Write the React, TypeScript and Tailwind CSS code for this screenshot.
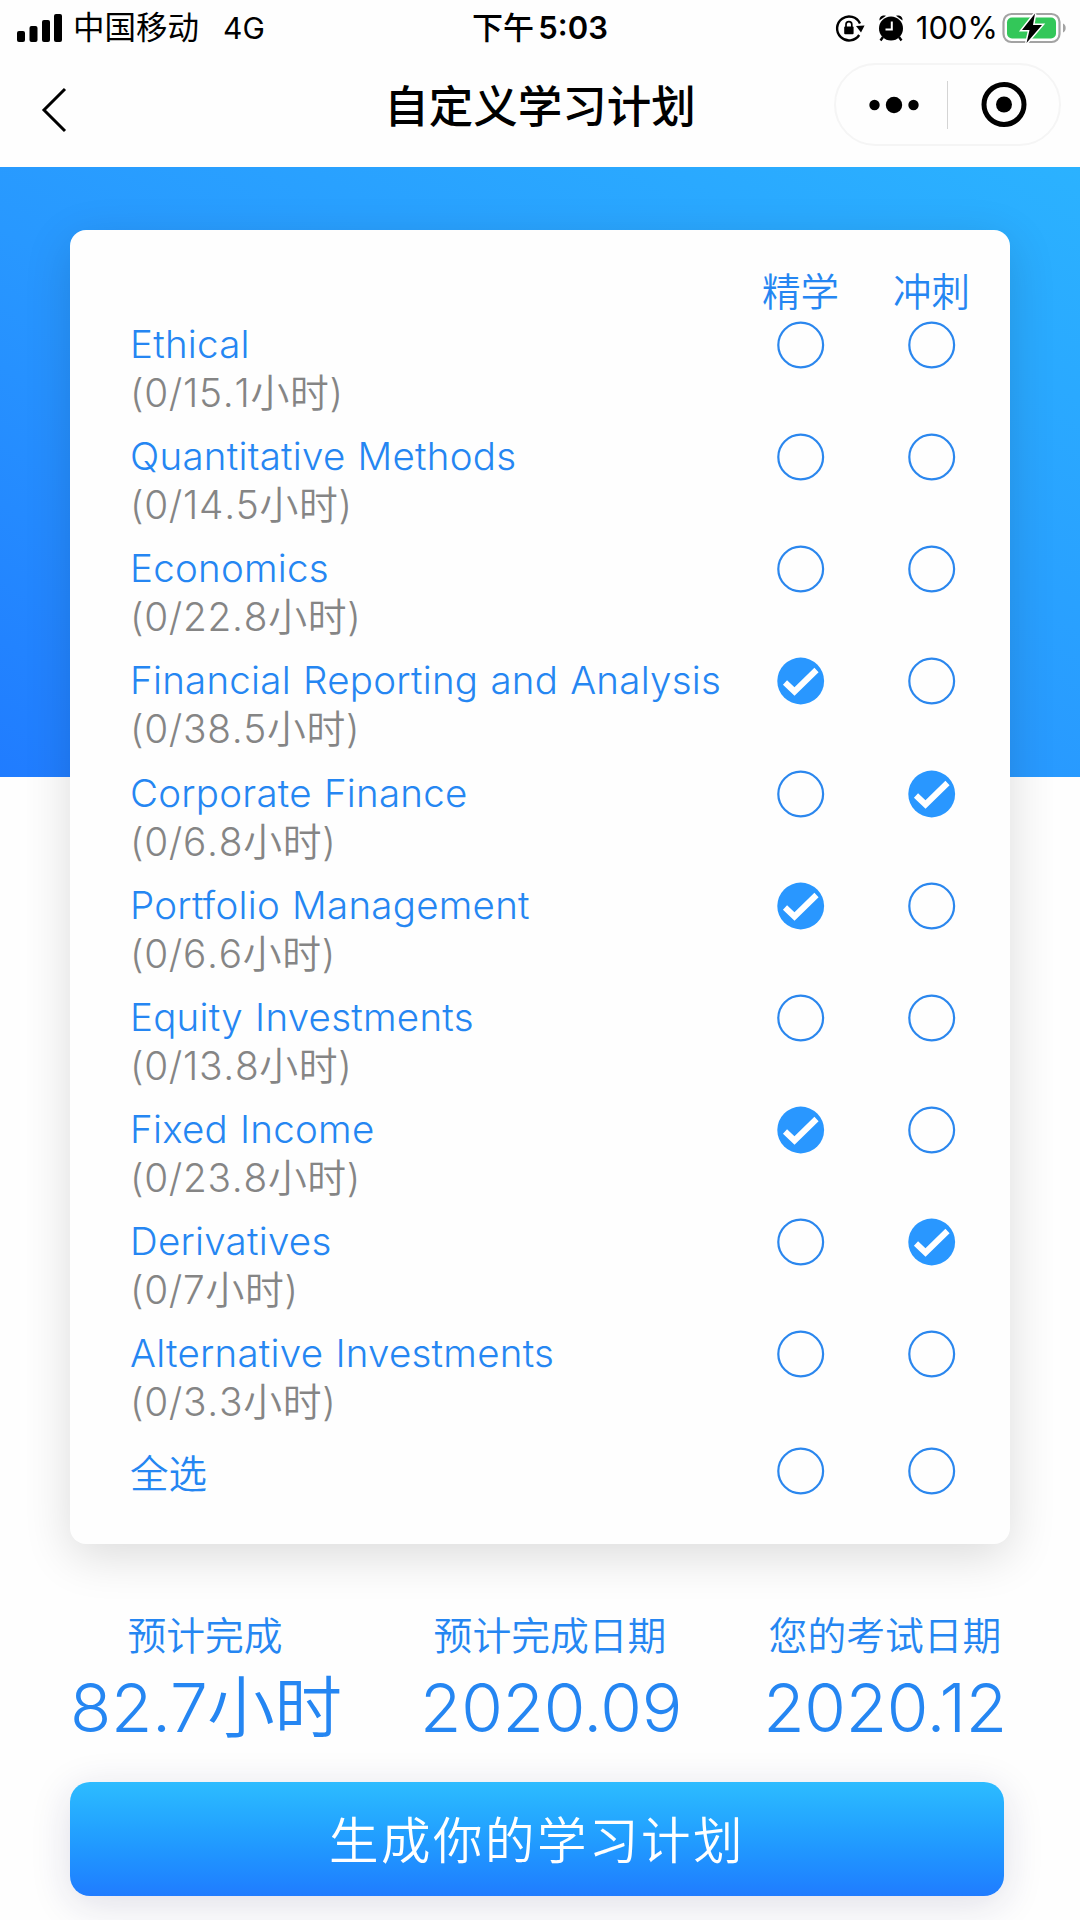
import { useState } from 'react'

type Mode = 'study' | 'sprint'

interface Subject {
  name: string
  hours: string
  mode: Mode | null
}

const initialSubjects: Subject[] = [
  { name: 'Ethical', hours: '15.1', mode: null },
  { name: 'Quantitative Methods', hours: '14.5', mode: null },
  { name: 'Economics', hours: '22.8', mode: null },
  { name: 'Financial Reporting and Analysis', hours: '38.5', mode: 'study' },
  { name: 'Corporate Finance', hours: '6.8', mode: 'sprint' },
  { name: 'Portfolio Management', hours: '6.6', mode: 'study' },
  { name: 'Equity Investments', hours: '13.8', mode: null },
  { name: 'Fixed Income', hours: '23.8', mode: 'study' },
  { name: 'Derivatives', hours: '7', mode: 'sprint' },
  { name: 'Alternative Investments', hours: '3.3', mode: null },
]

function StatusBar() {
  return (
    <div className="grid h-[54px] grid-cols-[1fr_auto_1fr] items-center text-[30px] leading-[54px] whitespace-nowrap">
      <div className="flex items-center pl-[17px]">
        <svg className="h-[28px] w-[46px]" viewBox="0 0 46 28">
          <rect x="0" y="17" width="8" height="11" rx="2" />
          <rect x="12.5" y="12" width="8" height="16" rx="2" />
          <rect x="25" y="6" width="8" height="22" rx="2" />
          <rect x="37" y="0" width="8" height="28" rx="2" />
        </svg>
        <span className="ml-[10px] pt-px text-[31.5px]">中国移动</span>
        <span className="ml-[24px]">4G</span>
      </div>
      <div className="text-[31px] font-medium">
        下午 <span className="-ml-1 font-semibold">5:03</span>
      </div>
      <div className="flex items-center justify-end pr-[12px]">
        <svg className="h-[30px] w-[30px]" viewBox="0 0 30 30">
          <path d="M25 10.5A12 12 0 1 0 24.2 22" fill="none" stroke="black" strokeWidth="2.4" />
          <path d="M21 13l8.6-.5-3.6 7z" />
          <rect x="9.2" y="13.5" width="9.4" height="7.8" rx="1" />
          <path d="M11 14v-2.4a2.9 2.9 0 0 1 5.8 0V14" fill="none" stroke="black" strokeWidth="1.7" />
        </svg>
        <svg className="ml-[13px] h-[30px] w-[26px]" viewBox="0 0 26 30">
          <circle cx="13" cy="15.5" r="12" />
          <path d="M1.5 7.5C1 4 4 1.5 8 2.8zM24.5 7.5C25 4 22 1.5 18 2.8z" />
          <path d="M5 24l-2.5 3.5M21 24l2.5 3.5" stroke="black" strokeWidth="2.4" />
          <path d="M13.8 8.5v8H7.5" fill="none" stroke="white" strokeWidth="2" />
        </svg>
        <span className="ml-[12px] text-[31px]">100%</span>
        <svg className="ml-[4px] h-[34px] w-[66px]" viewBox="0 0 66 34">
          <rect x="1.5" y="3" width="56" height="28" rx="8" fill="none" stroke="#a3a3a3" strokeWidth="2.2" />
          <rect x="5" y="6.5" width="49" height="21" rx="5" fill="#33c759" />
          <path d="M61 12.5c3.6 1.5 3.6 7.5 0 9z" fill="#a3a3a3" />
          <path d="M33 2.5L20 19h7.5l-3 13L40 14h-9z" fill="black" stroke="white" strokeWidth="3" paintOrder="stroke" />
        </svg>
      </div>
    </div>
  )
}

function NavBar() {
  return (
    <div className="grid h-[113px] grid-cols-[1fr_auto_1fr] items-start">
      <svg className="mt-[33px] ml-[41px] h-[46px] w-[27px]" viewBox="0 0 27 46" fill="none" stroke="black" strokeWidth="3">
        <path d="M24 2L3 23l21 21" />
      </svg>
      <h1 className="pt-[21px] text-[44.5px] leading-[64px] font-medium whitespace-nowrap">自定义学习计划</h1>
      <div className="mt-[9px] mr-[19px] flex h-[83px] w-[227px] items-center justify-self-end rounded-full border-2 border-[#f5f5f5]">
        <svg className="ml-[32px] h-[20px] w-[52px]" viewBox="0 0 52 20">
          <circle cx="6.5" cy="10" r="5.2" />
          <circle cx="26" cy="10" r="8.2" />
          <circle cx="45.5" cy="10" r="5.2" />
        </svg>
        <div className="ml-[27px] h-[48px] w-px bg-[#d4d4d4]" />
        <svg className="ml-[33px] h-[46px] w-[46px]" viewBox="0 0 46 46">
          <circle cx="23" cy="22.5" r="20" fill="none" stroke="black" strokeWidth="5" />
          <circle cx="23" cy="22.5" r="8" />
        </svg>
      </div>
    </div>
  )
}

function Radio({ checked, onClick }: { checked: boolean; onClick?: () => void }) {
  return (
    <button type="button" role="radio" aria-checked={checked} onClick={onClick} className="block h-[48px] w-[48px]">
      <svg className="h-full w-full" viewBox="0 0 48 48">
        {checked ? (
          <>
            <circle cx="23.7" cy="24" r="23.4" fill="#2997ff" />
            <path d="M8 25.5l9.5 9L39.5 13" fill="none" stroke="white" strokeWidth="6" />
          </>
        ) : (
          <circle cx="23.7" cy="24" r="22.4" fill="none" stroke="#2b87ee" strokeWidth="2.2" />
        )}
      </svg>
    </button>
  )
}

function Stat({ label, value, className }: { label: string; value: string; className: string }) {
  return (
    <div className={className}>
      <div className="text-[38.8px] leading-[56px]">{label}</div>
      <div className="text-[67.5px] leading-[88px] tracking-[-0.3px]">{value}</div>
    </div>
  )
}

export default function App() {
  const [subjects, setSubjects] = useState(initialSubjects)

  const toggle = (index: number, mode: Mode) => {
    setSubjects(subjects.map((s, i) => (i === index ? { ...s, mode: s.mode === mode ? null : mode } : s)))
  }

  const toggleAll = (mode: Mode) => {
    const all = subjects.every((s) => s.mode === mode)
    setSubjects(subjects.map((s) => ({ ...s, mode: all ? null : mode })))
  }

  return (
    <div className="h-[1920px] w-[1080px] overflow-hidden bg-[#fefefe] font-['Inter','Noto_Sans_CJK_SC',sans-serif] text-black">
      <StatusBar />
      <NavBar />
      <main className="h-[1753px] bg-[linear-gradient(to_top_right,#207cff,#2898ff_45%,#2bb2ff)] bg-[length:100%_610px] bg-no-repeat pt-[63px] pl-[70px] font-[350] text-[#2586f2]">
        <section className="h-[1314px] w-[940px] rounded-[16px] bg-[#fefefe] pt-[31px] pl-[60px] shadow-[0_12px_48px_rgba(0,0,0,0.14)]">
          <div className="grid h-[60px] grid-cols-[605px_131px_131px] pt-px text-center text-[38.5px] leading-[60px]">
            <span />
            <span>精学</span>
            <span>冲刺</span>
          </div>
          {subjects.map((s, i) => (
            <div key={s.name} className="grid h-[112.15px] grid-cols-[605px_131px_131px] justify-items-center whitespace-nowrap">
              <div className="justify-self-start">
                <div className="text-[38.5px] leading-[46px] tracking-[0.25px] [word-spacing:1px]">{s.name}</div>
                <div className="pt-px text-[38.8px] leading-[50px] tracking-[0.7px] text-[#858585] [font-kerning:none]">(0/{s.hours}小时)</div>
              </div>
              <Radio checked={s.mode === 'study'} onClick={() => toggle(i, 'study')} />
              <Radio checked={s.mode === 'sprint'} onClick={() => toggle(i, 'sprint')} />
            </div>
          ))}
          <div className="mt-[5px] grid grid-cols-[605px_131px_131px] justify-items-center">
            <div className="justify-self-start text-[38.5px] leading-[54px]">全选</div>
            <Radio checked={subjects.every((s) => s.mode === 'study')} onClick={() => toggleAll('study')} />
            <Radio checked={subjects.every((s) => s.mode === 'sprint')} onClick={() => toggleAll('sprint')} />
          </div>
        </section>
        <section className="mt-[64px] flex w-[940px] justify-between text-center whitespace-nowrap">
          <Stat label="预计完成" value="82.7小时" className="w-[270px]" />
          <Stat label="预计完成日期" value="2020.09" className="w-[260px]" />
          <Stat label="您的考试日期" value="2020.12" className="w-[250px]" />
        </section>
        <button
          type="button"
          className="mt-[30px] block h-[114px] w-[934px] rounded-[20px] bg-linear-to-b from-[#2dbcff] to-[#207cff] pt-[5px] text-[49.5px] tracking-[2.5px] text-white shadow-[0_8px_40px_rgba(30,30,90,0.14)]"
        >
          生成你的学习计划
        </button>
      </main>
    </div>
  )
}
